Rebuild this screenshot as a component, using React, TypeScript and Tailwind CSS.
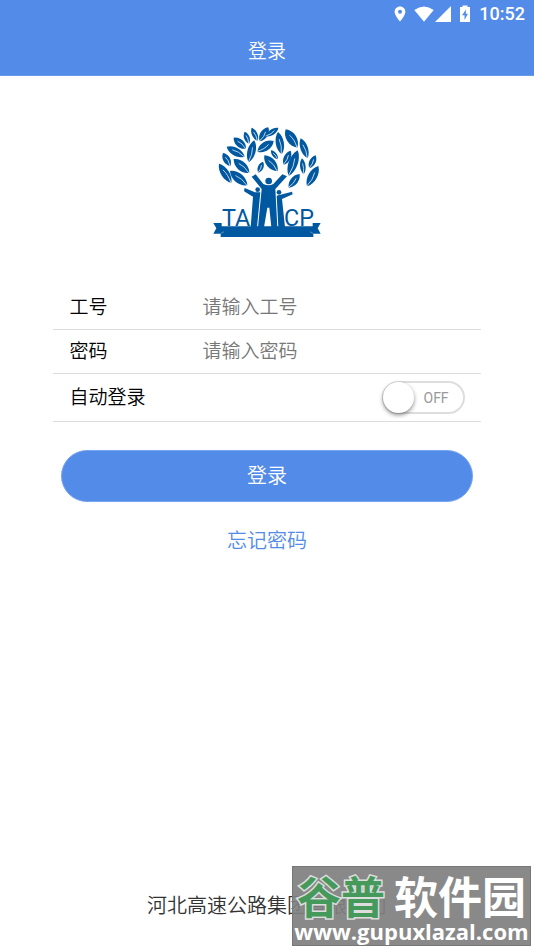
import { useState } from "react";

type Leaf = [number, number, number, number, number];

// Tip x/y, base x/y and width of every leaf in the crown.
const leaves: Leaf[] = [
  [155, 38, 173, 78, 15],
  [205, 37, 179, 79, 21],
  [235, 39, 198, 64, 15],
  [134, 50, 147, 86, 15],
  [101, 68, 138, 101, 21],
  [80, 95, 134, 125, 22],
  [163, 76, 146, 142, 22],
  [221, 78, 172, 110, 24],
  [234, 51, 245, 118, 22],
  [257, 43, 292, 98, 27],
  [302, 70, 323, 130, 20],
  [213, 106, 234, 133, 12],
  [272, 107, 251, 149, 18],
  [193, 121, 233, 169, 25],
  [293, 106, 266, 183, 25],
  [347, 121, 328, 160, 17],
  [306, 130, 311, 178, 15],
  [69, 114, 91, 153, 19],
  [101, 132, 148, 174, 25],
  [189, 140, 175, 173, 15],
  [57, 146, 94, 204, 22],
  [90, 168, 142, 211, 25],
  [299, 177, 266, 218, 20],
  [355, 153, 321, 214, 24],
];

function LeafShape({ leaf }: { leaf: Leaf }) {
  const [x1, y1, x2, y2, width] = leaf;
  const dx = x2 - x1;
  const dy = y2 - y1;
  const length = Math.hypot(dx, dy);
  const angle = (Math.atan2(dy, dx) * 180) / Math.PI;
  const w = width * 0.74;
  return (
    <g transform={`translate(${x1} ${y1}) rotate(${angle})`}>
      <path
        fill="#0058a0"
        d={`M0 0C${length * 0.25} ${-w} ${length * 0.75} ${-w} ${length} 0C${length * 0.75} ${w} ${length * 0.25} ${w} 0 0Z`}
      />
      <path
        fill="none"
        stroke="#fff"
        strokeWidth="2"
        d={`M${length * 0.32} 0Q${length * 0.6} ${-w * 0.35} ${length} 1`}
      />
    </g>
  );
}

function Logo() {
  return (
    <svg viewBox="0 0 402 390" className="h-[130px] w-[134px]" role="img" aria-label="TACP">
      {leaves.map((leaf) => (
        <LeafShape key={leaf.join("-")} leaf={leaf} />
      ))}
      <g fill="#0058a0">
        <circle cx="206" cy="198" r="10" />
        <path d="M155 185L167 178L190 207Q206 215 220 207L247 178L261 184L226 222L232 337H214L208 278H202L192 337H174L185 222Z" />
        <circle cx="173" cy="224" r="7" />
        <path d="M134 219L165 232H181L171 337H152L159 245L132 229Z" />
        <circle cx="237" cy="232" r="7" />
        <path d="M230 242L276 230L278 238L246 252L255 337H235Z" />
        <path d="M40 324H65V334H338V324H362L353 340L362 356H340V366H62V356H40L49 340Z" />
        <text x="66" y="334" fontSize="70" fontWeight="400" fontFamily="Roboto, sans-serif">TA</text>
        <text x="252" y="334" fontSize="70" fontWeight="400" fontFamily="Roboto, sans-serif">CP</text>
      </g>
      <path d="M62 356L72 350M340 356L330 350" stroke="#fff" strokeWidth="1" />
    </svg>
  );
}

function StatusBar() {
  return (
    <div className="flex h-7 items-center justify-end pr-[9px] text-white">
      <svg viewBox="0 0 12 16" className="mr-2 h-4 w-3" fill="currentColor" aria-hidden="true">
        <path fillRule="evenodd" d="M6 0.5C2.9 0.5 0.6 2.8 0.6 5.8C0.6 9.6 6 15.5 6 15.5S11.4 9.6 11.4 5.8C11.4 2.8 9.1 0.5 6 0.5ZM6 3.8A2 2 0 1 1 6 7.8A2 2 0 0 1 6 3.8Z" />
      </svg>
      <svg viewBox="0 0 20 16" className="h-4 w-5" fill="currentColor" aria-hidden="true">
        <path d="M0.3 4Q10-3 19.7 4L10 15.7Z" />
      </svg>
      <svg viewBox="0 0 16 16" className="mr-2 ml-px h-4 w-4" fill="currentColor" aria-hidden="true">
        <path d="M16 0V16H0Z" />
      </svg>
      <svg viewBox="0 0 12 18" className="mr-2 h-[18px] w-3" fill="currentColor" aria-hidden="true">
        <path fillRule="evenodd" d="M3.5 0.5H8.5V2H11V17H1V2H3.5ZM7 4.5L3 10.3H5.5V15L9 8.8H6.8Z" />
      </svg>
      <span className="font-['Roboto',sans-serif] text-lg font-medium">10:52</span>
    </div>
  );
}

function Field({ id, label, type, placeholder }: { id: string; label: string; type: string; placeholder: string }) {
  return (
    <div className="flex h-11 items-center border-b border-[#ddd] px-4 pb-0.5">
      <label htmlFor={id} className="w-[133px] shrink-0">{label}</label>
      <input
        id={id}
        type={type}
        placeholder={placeholder}
        className="min-w-0 flex-1 bg-transparent outline-none placeholder:text-[#777]"
      />
    </div>
  );
}

export default function App() {
  const [auto, setAuto] = useState(false);
  return (
    <div className="relative flex min-h-screen flex-col bg-white font-['Noto_Sans_CJK_SC',sans-serif] text-[19px] font-[350] text-black">
      <header className="border-b border-[#6b9aeb] bg-[#538be8] text-white">
        <StatusBar />
        <h1 className="flex h-[47px] items-center justify-center pb-0.5">登录</h1>
      </header>
      <main className="flex flex-1 flex-col px-[10%] pt-[39px]">
        <div className="flex justify-center">
          <Logo />
        </div>
        <form className="pt-[41px]" onSubmit={(event) => event.preventDefault()}>
          <Field id="worker" label="工号" type="text" placeholder="请输入工号" />
          <Field id="password" label="密码" type="password" placeholder="请输入密码" />
          <div className="flex h-12 items-center justify-between border-b border-[#ddd] px-4">
            <label htmlFor="auto" className="pb-0.5">自动登录</label>
            <div className="relative h-[33px] w-[83px]">
              <input
                id="auto"
                type="checkbox"
                checked={auto}
                onChange={(event) => setAuto(event.target.checked)}
                className="block h-full w-full appearance-none rounded-full border-2 border-[#ddd] bg-white before:-mt-px before:-ml-px before:block before:size-[31px] before:rounded-full before:bg-white before:shadow-[0_2px_4px_rgba(0,0,0,0.45)] checked:bg-[#538be8] checked:before:ml-[49px]"
              />
              <span className={auto ? "hidden" : "pointer-events-none absolute inset-y-0 right-4 flex items-center font-['Roboto',sans-serif] text-sm font-normal text-[#999]"}>
                OFF
              </span>
            </div>
          </div>
          <div className="px-2 pt-7">
            <button type="submit" className="h-[52px] w-full rounded-full border border-[#78a5f0] bg-[#538be8] pb-0.5 text-xl text-white">
              登录
            </button>
          </div>
          <div className="pt-6 text-center text-xl">
            <a href="#forgot" className="text-[#538be8]">忘记密码</a>
          </div>
        </form>
      </main>
      <footer className="pb-[31px] text-center text-xl text-[#333]">河北高速公路集团有限公司</footer>
      <div className="absolute right-[3px] bottom-1 flex h-20 w-[239px] flex-col border border-[#777] bg-[#808080]/93 text-white">
        <div className="flex justify-between px-1 pt-1 text-[44px] leading-[48px] font-bold">
          <span className="text-[#459a5b] [-webkit-text-stroke:3px_#ddd] [paint-order:stroke_fill]">谷普</span>
          <span>软件园</span>
        </div>
        <span className="text-center font-['Open_Sans',sans-serif] text-[22px] leading-6 font-bold">www.gupuxlazal.com</span>
      </div>
    </div>
  );
}
